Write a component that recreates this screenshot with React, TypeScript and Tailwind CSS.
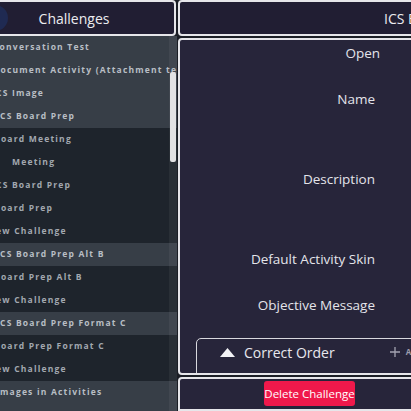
import React from 'react';

type Row = { title: string; parent: boolean; pad: string };

const rows: Row[] = [
  { title: 'Conversation Test', parent: true, pad: 'pl-[21px]' },
  { title: 'Document Activity (Attachment test)', parent: true, pad: 'pl-[21px]' },
  { title: 'ICS Image', parent: true, pad: 'pl-[20px]' },
  { title: 'ICS Board Prep', parent: true, pad: 'pl-[24px]' },
  { title: 'Board Meeting', parent: false, pad: 'pl-[22px]' },
  { title: 'Meeting', parent: false, pad: 'pl-[40px]' },
  { title: 'ICS Board Prep', parent: false, pad: 'pl-[20px]' },
  { title: 'Board Prep', parent: false, pad: 'pl-[22px]' },
  { title: 'New Challenge', parent: false, pad: 'pl-[16px]' },
  { title: 'ICS Board Prep Alt B', parent: true, pad: 'pl-[24px]' },
  { title: 'Board Prep Alt B', parent: false, pad: 'pl-[22px]' },
  { title: 'New Challenge', parent: false, pad: 'pl-[16px]' },
  { title: 'ICS Board Prep Format C', parent: true, pad: 'pl-[24px]' },
  { title: 'Board Prep Format C', parent: false, pad: 'pl-[22px]' },
  { title: 'New Challenge', parent: false, pad: 'pl-[16px]' },
  { title: 'Images in Activities', parent: true, pad: 'pl-[24px]' },
  { title: 'Images and Correct Order', parent: true, pad: 'pl-[24px]' },
];

const font = { fontFamily: '"Open Sans", "Noto Sans", sans-serif' };

export default function App() {
  return (
    <div className="w-[411px] h-[411px] overflow-hidden flex bg-[#1b1e25]" style={font}>
      {/* challenge list */}
      <div className="w-[205px] -ml-[28px] shrink-0 flex flex-col">
        <div className="relative h-[36px] mr-[1px] border-2 border-[#e6e6ea] rounded-[4px] bg-[#211e33] flex items-center justify-center">
          <div className="absolute left-[6px] top-[3px] w-[28px] h-[26px] rounded-full bg-[#1f2a52]" />
          <span className="text-[14px] text-[#ececf0]">Challenges</span>
        </div>
        <div className="relative flex-1 overflow-hidden flex flex-col">
          {rows.map((r, i) => (
            <div
              key={i}
              className={
                'h-[23px] shrink-0 flex items-center whitespace-nowrap overflow-hidden text-[8.5px] font-bold tracking-[1.2px] ' +
                r.pad +
                (r.parent ? ' bg-[#373e47] text-[#b9bec5]' : ' bg-[#1e242c] text-[#a2a8b0]')
              }
            >
              {r.title}
            </div>
          ))}
          {/* overlay scrollbar */}
          <div className="absolute top-0 right-0 bottom-0 w-[8px] bg-[#ffffff0d]">
            <div className="mt-[36px] mx-[1px] h-[90px] bg-[#e2e2e4] rounded-[2px]" />
          </div>
        </div>
      </div>

      {/* challenge editor */}
      <div className="w-[520px] shrink-0 ml-[1px] flex flex-col gap-[2px]">
        <div className="h-[36px] shrink-0 border-2 border-[#e6e6ea] rounded-[4px] bg-[#211e33] flex items-center pl-[204px]">
          <span className="text-[14px] text-[#ececf0] whitespace-nowrap">ICS Board Prep</span>
        </div>
        <div className="h-[337px] shrink-0 border-2 border-[#e6e6ea] rounded-[4px] bg-[#27253a] overflow-hidden flex flex-col">
          <div className="w-[195px] text-right text-[13.5px] text-[#e4e4ea] leading-[20px] pt-[3px] flex flex-col">
            <span className="mr-[-5px]">Open</span>
            <span className="mt-[26px]">Name</span>
            <span className="mt-[60px]">Description</span>
            <span className="mt-[60px]">Default Activity Skin</span>
            <span className="mt-[26px]">Objective Message</span>
          </div>
          <div className="mt-[23px] ml-[16px] h-[60px] shrink-0 border border-[#d8d8de] rounded-tl-[5px] flex items-start pt-[3px]">
            <div className="flex items-center h-[20px] pl-[23px]">
              <svg width="15" height="9" viewBox="0 0 15 9" className="mr-[9px]">
                <polygon points="7.5,0 15,9 0,9" fill="#f2f2f5" />
              </svg>
              <span className="text-[14px] text-[#e8e8ee]">Correct Order</span>
            </div>
            <div className="flex items-center h-[20px] ml-[55px] text-[#9d9cab]">
              <svg width="10" height="10" viewBox="0 0 10 10" className="mr-[6px]">
                <path d="M5 0v10M0 5h10" stroke="#a4a3b1" strokeWidth="1.3" />
              </svg>
              <span className="text-[8px] font-bold tracking-[1px]">ADD</span>
            </div>
          </div>
        </div>
        <div className="flex-1 border-2 border-[#e6e6ea] rounded-t-[4px] bg-[#27253a] flex items-start pt-[2px] pl-[84px]">
          <button className="w-[91px] h-[25px] rounded-[3px] bg-[#f0194b] text-white text-[11.5px] whitespace-nowrap">
            Delete Challenge
          </button>
        </div>
      </div>
    </div>
  );
}
